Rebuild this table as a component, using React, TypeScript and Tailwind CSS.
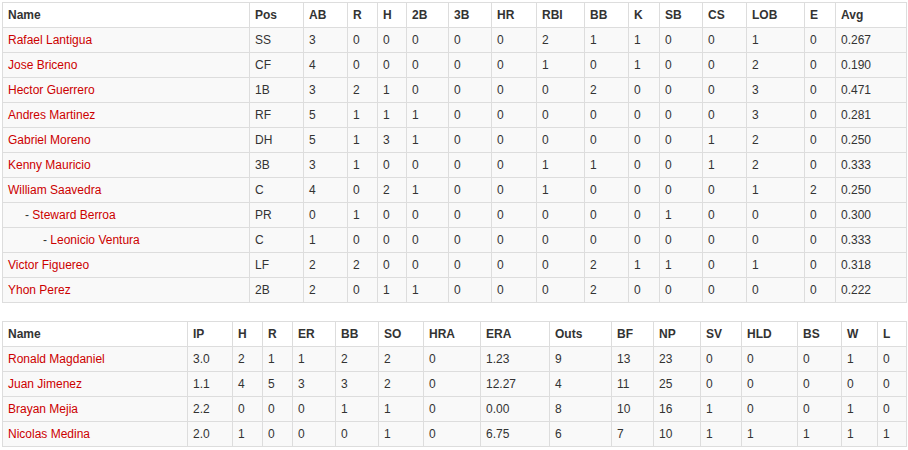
import React from "react";

type Batter = { name: string; level?: number; vals: string[] };

const batHead = ["Name", "Pos", "AB", "R", "H", "2B", "3B", "HR", "RBI", "BB", "K", "SB", "CS", "LOB", "E", "Avg"];
const batW = [247, 54, 44, 30, 29, 42, 43, 45, 48, 44, 31, 43, 44, 58, 31, 71];

const batters: Batter[] = [
  { name: "Rafael Lantigua", vals: ["SS", "3", "0", "0", "0", "0", "0", "2", "1", "1", "0", "0", "1", "0", "0.267"] },
  { name: "Jose Briceno", vals: ["CF", "4", "0", "0", "0", "0", "0", "1", "0", "1", "0", "0", "2", "0", "0.190"] },
  { name: "Hector Guerrero", vals: ["1B", "3", "2", "1", "0", "0", "0", "0", "2", "0", "0", "0", "3", "0", "0.471"] },
  { name: "Andres Martinez", vals: ["RF", "5", "1", "1", "1", "0", "0", "0", "0", "0", "0", "0", "3", "0", "0.281"] },
  { name: "Gabriel Moreno", vals: ["DH", "5", "1", "3", "1", "0", "0", "0", "0", "0", "0", "1", "2", "0", "0.250"] },
  { name: "Kenny Mauricio", vals: ["3B", "3", "1", "0", "0", "0", "0", "1", "1", "0", "0", "1", "2", "0", "0.333"] },
  { name: "William Saavedra", vals: ["C", "4", "0", "2", "1", "0", "0", "1", "0", "0", "0", "0", "1", "2", "0.250"] },
  { name: "Steward Berroa", level: 1, vals: ["PR", "0", "1", "0", "0", "0", "0", "0", "0", "0", "1", "0", "0", "0", "0.300"] },
  { name: "Leonicio Ventura", level: 2, vals: ["C", "1", "0", "0", "0", "0", "0", "0", "0", "0", "0", "0", "0", "0", "0.333"] },
  { name: "Victor Figuereo", vals: ["LF", "2", "2", "0", "0", "0", "0", "0", "2", "1", "1", "0", "1", "0", "0.318"] },
  { name: "Yhon Perez", vals: ["2B", "2", "0", "1", "1", "0", "0", "0", "2", "0", "0", "0", "0", "0", "0.222"] },
];

const pitHead = ["Name", "IP", "H", "R", "ER", "BB", "SO", "HRA", "ERA", "Outs", "BF", "NP", "SV", "HLD", "BS", "W", "L"];
const pitW = [185, 45, 30, 30, 43, 43, 45, 57, 69, 62, 42, 47, 41, 56, 44, 36, 29];

const pitchers: Batter[] = [
  { name: "Ronald Magdaniel", vals: ["3.0", "2", "1", "1", "2", "2", "0", "1.23", "9", "13", "23", "0", "0", "0", "1", "0"] },
  { name: "Juan Jimenez", vals: ["1.1", "4", "5", "3", "3", "2", "0", "12.27", "4", "11", "25", "0", "0", "0", "0", "0"] },
  { name: "Brayan Mejia", vals: ["2.2", "0", "0", "0", "1", "1", "0", "0.00", "8", "10", "16", "1", "0", "0", "1", "0"] },
  { name: "Nicolas Medina", vals: ["2.0", "1", "0", "0", "0", "1", "0", "6.75", "6", "7", "10", "1", "1", "1", "1", "1"] },
];

const cell = "h-[25px] border border-[#dddddd] px-[5px] py-0 align-middle leading-[17px] text-left";

function StatTable({ head, widths, rows }: { head: string[]; widths: number[]; rows: Batter[] }) {
  return (
    <table className="table-fixed border-collapse w-[905px] text-[12px] text-[#333333]" style={{ fontFamily: '"Liberation Sans", Arial, sans-serif' }}>
      <colgroup>
        {widths.map((w, i) => (
          <col key={i} style={{ width: w }} />
        ))}
      </colgroup>
      <thead>
        <tr className="bg-white">
          {head.map((h) => (
            <th key={h} className={`${cell} font-bold`}>
              {h}
            </th>
          ))}
        </tr>
      </thead>
      <tbody>
        {rows.map((r) => (
          <tr key={r.name} className="bg-[#f9f9f9]">
            <td className={cell}>
              {r.level === 1 && <span className="pl-[17px]">- </span>}
              {r.level === 2 && <span className="pl-[35px]">- </span>}
              <span className="text-[#cc0000]">{r.name}</span>
            </td>
            {r.vals.map((v, i) => (
              <td key={i} className={cell}>
                {v}
              </td>
            ))}
          </tr>
        ))}
      </tbody>
    </table>
  );
}

export default function App() {
  return (
    <div className="bg-white w-[908px] h-[450px] pt-[2px] pl-[2px]">
      <StatTable head={batHead} widths={batW} rows={batters} />
      <div className="h-[18px]" />
      <StatTable head={pitHead} widths={pitW} rows={pitchers} />
    </div>
  );
}
